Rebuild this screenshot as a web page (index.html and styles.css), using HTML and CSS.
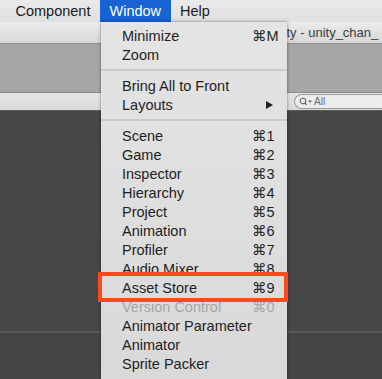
FILE: index.html
```html
<!DOCTYPE html>
<html>
<head>
<meta charset="utf-8">
<link rel="stylesheet" href="styles.css">
</head>
<body>
<div class="screen">
  <div class="menubar">
    <span class="mb-item">Component</span>
    <span class="mb-item active">Window</span>
    <span class="mb-item">Help</span>
  </div>
  <div class="titlebar"><span class="title">Unity - unity_chan_</span></div>
  <div class="graybar"></div>
  <div class="toolbar">
    <div class="search">
      <svg class="search-icon" width="14" height="9" viewBox="0 0 14 9">
        <circle cx="4" cy="4" r="2.8" fill="none" stroke="#666" stroke-width="1.1"/>
        <line x1="6" y1="6" x2="7.6" y2="7.8" stroke="#666" stroke-width="1.2"/>
        <path d="M9 3.5 L13 3.5 L11 6 Z" fill="#666"/>
      </svg>
      <span class="search-text">All</span>
    </div>
  </div>
  <div class="dark">
    <div class="dark-top"></div>
    <div class="dark-line"></div>
    <div class="dark-bottom"></div>
  </div>

  <div class="menu">
    <div class="item"><span>Minimize</span><span class="sc">⌘M</span></div>
    <div class="item"><span>Zoom</span><span class="sc"></span></div>
    <div class="sep"></div>
    <div class="item"><span>Bring All to Front</span><span class="sc"></span></div>
    <div class="item"><span>Layouts</span><span class="sc"><span class="arrow"></span></span></div>
    <div class="sep"></div>
    <div class="item"><span>Scene</span><span class="sc">⌘1</span></div>
    <div class="item"><span>Game</span><span class="sc">⌘2</span></div>
    <div class="item"><span>Inspector</span><span class="sc">⌘3</span></div>
    <div class="item"><span>Hierarchy</span><span class="sc">⌘4</span></div>
    <div class="item"><span>Project</span><span class="sc">⌘5</span></div>
    <div class="item"><span>Animation</span><span class="sc">⌘6</span></div>
    <div class="item"><span>Profiler</span><span class="sc">⌘7</span></div>
    <div class="item"><span>Audio Mixer</span><span class="sc">⌘8</span></div>
    <div class="item"><span>Asset Store</span><span class="sc">⌘9</span></div>
    <div class="item disabled"><span>Version Control</span><span class="sc">⌘0</span></div>
    <div class="item"><span>Animator Parameter</span><span class="sc"></span></div>
    <div class="item"><span>Animator</span><span class="sc"></span></div>
    <div class="item"><span>Sprite Packer</span><span class="sc"></span></div>
  </div>

  <div class="callout"></div>
</div>
</body>
</html>
```

FILE: styles.css
```css
html, body {
  margin: 0;
  padding: 0;
}
body {
  width: 382px;
  height: 379px;
  overflow: hidden;
  font-family: "Liberation Sans", "DejaVu Sans", Arial, sans-serif;
  color: #1e1e1e;
}
.screen {
  position: relative;
  width: 382px;
  height: 379px;
  overflow: hidden;
  display: flex;
  flex-direction: column;
  background: #474747;
}
.menubar {
  height: 22px;
  flex: none;
  display: flex;
  align-items: stretch;
  padding-left: 6px;
  background: linear-gradient(#e9e9e9, #e0e0e0);
  font-size: 14.5px;
}
.mb-item {
  display: flex;
  align-items: center;
  padding: 0 9.5px;
  color: #1a1a1a;
}
.mb-item.active {
  background: #1763d3;
  color: #ffffff;
}
.titlebar {
  height: 22px;
  flex: none;
  display: flex;
  align-items: center;
  padding-left: 267px;
  background: linear-gradient(#ececec, #d6d6d6);
  border-bottom: 1px solid #8e8e8e;
  font-size: 13px;
  color: #3c3c3c;
  white-space: nowrap;
  box-sizing: border-box;
  overflow: hidden;
}
.graybar {
  height: 49px;
  flex: none;
  background: #a6a6a6;
  border-bottom: 1px solid #8a8a8a;
  box-sizing: border-box;
}
.toolbar {
  height: 18px;
  flex: none;
  display: flex;
  align-items: center;
  padding-left: 294px;
  background: linear-gradient(#e6e6e6, #d9d9d9);
  border-bottom: 1px solid #5a5a5a;
  box-sizing: border-box;
}
.search {
  flex: 1;
  height: 13px;
  display: flex;
  align-items: center;
  gap: 1px;
  padding-left: 4px;
  border: 1px solid #9c9c9c;
  border-right: none;
  border-radius: 8px 0 0 8px;
  background: #ececec;
}
.search-text {
  font-size: 10px;
  color: #6a6a6a;
}
.dark {
  flex: 1;
  display: flex;
  flex-direction: column;
}
.dark-top {
  height: 220px;
  background: #474747;
}
.dark-line {
  height: 2px;
  background: linear-gradient(#5c5c5c, #505050);
}
.dark-bottom {
  flex: 1;
  background: #454545;
}

.menu {
  position: absolute;
  left: 101px;
  top: 22px;
  width: 186px;
  bottom: 0;
  padding-top: 4px;
  box-sizing: border-box;
  background: linear-gradient(#e4e4e4, #d9d9d9);
  box-shadow: 0 0 3px rgba(0, 0, 0, 0.45);
  font-size: 14.5px;
}
.item {
  height: 19px;
  display: grid;
  grid-template-columns: 1fr 35px;
  align-items: center;
  padding-left: 21px;
  white-space: nowrap;
  color: #1e1e1e;
}
.item.disabled {
  color: #a6a6a6;
}
.sc {
  display: flex;
  align-items: center;
}
.arrow {
  width: 0;
  height: 0;
  margin-left: 14px;
  border-left: 7px solid #222;
  border-top: 4px solid transparent;
  border-bottom: 4px solid transparent;
}
.sep {
  height: 12px;
  display: flex;
  align-items: center;
}
.sep::before {
  content: "";
  display: block;
  width: 100%;
  height: 2px;
  background: #cacaca;
}
.callout {
  position: absolute;
  left: 98px;
  top: 272px;
  width: 190px;
  height: 30px;
  box-sizing: border-box;
  border: 4px solid #fc4a1c;
}
```
